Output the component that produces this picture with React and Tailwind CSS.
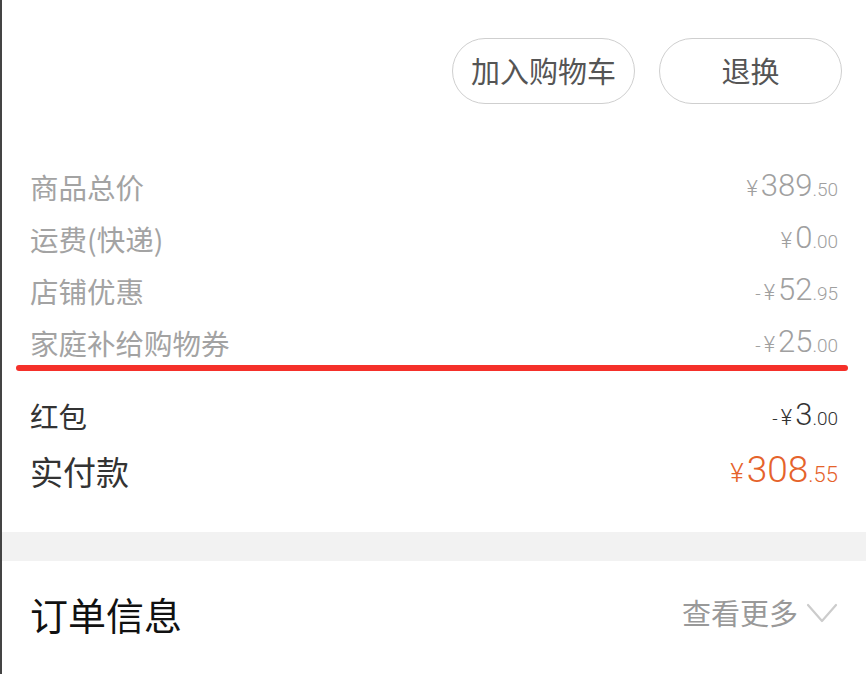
import React from "react";

const cjk = { fontFamily: '"Noto Sans CJK SC", "Noto Sans", sans-serif' };
const num = { fontFamily: 'Roboto, "Noto Sans CJK SC", sans-serif' };

function Amount({ neg, int, dec, color, big }) {
  return (
    <span className={`flex items-baseline font-light ${color}`} style={num}>
      {neg && <span className={big ? "text-[22px] mr-[3px]" : "text-[19px] mr-[3px]"}>-</span>}
      <span className={big ? "text-[26px] mr-[3px]" : "text-[22px] mr-[3px]"}>¥</span>
      <span className={big ? "text-[37px] leading-none" : "text-[31px] leading-none"}>{int}</span>
      <span className={big ? "text-[22px]" : "text-[19px]"}>.{dec}</span>
    </span>
  );
}

function Row({ label, amount }) {
  return (
    <div className="flex h-[52px] items-center justify-between pl-[28px] pr-[28px]">
      <span className="text-[28.5px] text-[#a3a3a3]" style={cjk}>{label}</span>
      {amount}
    </div>
  );
}

export default function App() {
  return (
    <div className="w-[866px] h-[674px] overflow-hidden bg-white border-l-2 border-[#444]" style={cjk}>
      <div className="flex justify-end gap-[24px] pt-[38px] pr-[24px]">
        <button className="h-[66px] w-[183px] rounded-full border-[1.5px] border-[#cfcfcf] text-[29px] text-[#555]" style={cjk}>加入购物车</button>
        <button className="h-[66px] w-[183px] rounded-full border-[1.5px] border-[#cfcfcf] text-[29px] text-[#555]" style={cjk}>退换</button>
      </div>
      <div className="mt-[57px] flex flex-col">
        <Row label="商品总价" amount={<Amount int="389" dec="50" color="text-[#a0a0a0]" />} />
        <Row label="运费(快递)" amount={<Amount int="0" dec="00" color="text-[#a0a0a0]" />} />
        <Row label="店铺优惠" amount={<Amount neg int="52" dec="95" color="text-[#a0a0a0]" />} />
        <Row label="家庭补给购物券" amount={<Amount neg int="25" dec="00" color="text-[#a0a0a0]" />} />
      </div>
      <div className="-mt-[4px] ml-[14px] mr-[18px] h-[6px] rounded-full bg-[#f5302a]" />
      <div className="mt-[19px] flex h-[52px] items-center justify-between pl-[28px] pr-[28px]">
        <span className="text-[28.5px] text-[#333]" style={cjk}>红包</span>
        <Amount neg int="3" dec="00" color="text-[#333]" />
      </div>
      <div className="flex h-[60px] items-center justify-between pl-[28px] pr-[28px]">
        <span className="text-[33px] text-[#333]" style={cjk}>实付款</span>
        <Amount big int="308" dec="55" color="text-[#e5632b]" />
      </div>
      <div className="mt-[30px] h-[29px] bg-[#f2f2f2]" />
      <div className="flex h-[104px] items-center justify-between pl-[28px] pr-[28px]">
        <span className="text-[38px] text-[#111]" style={cjk}>订单信息</span>
        <span className="flex items-center gap-[8px]">
          <span className="text-[29px] text-[#999]" style={cjk}>查看更多</span>
          <svg width="32" height="20" viewBox="0 0 32 20" fill="none">
            <polyline points="2,2 16,18 30,2" stroke="#cccccc" strokeWidth="2.2" strokeLinecap="round" strokeLinejoin="round" />
          </svg>
        </span>
      </div>
    </div>
  );
}
